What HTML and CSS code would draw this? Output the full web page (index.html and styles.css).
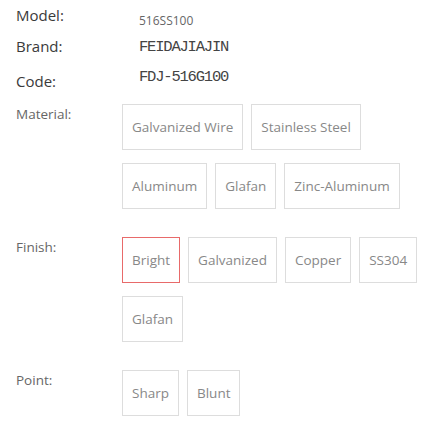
FILE: index.html
```html
<!DOCTYPE html>
<html lang="en">
<head>
    <meta charset="UTF-8">
    <title>Product</title>
    <link rel="stylesheet" href="styles.css">
</head>
<body>
<div class="product">

    <!-- basic info -->
    <div class="info">
        <div class="info-row row-model">
            <span class="info-label">Model:</span>
            <span class="info-value model-value">516SS100</span>
        </div>
        <div class="info-row row-brand">
            <span class="info-label">Brand:</span>
            <span class="info-value mono">FEIDAJIAJIN</span>
        </div>
        <div class="info-row row-code">
            <span class="info-label">Code:</span>
            <span class="info-value mono">FDJ-516G100</span>
        </div>
    </div>

    <!-- options -->
    <div class="option">
        <div class="option-label">Material:</div>
        <div class="option-list">
            <a href="#" class="option-item">Galvanized Wire</a>
            <a href="#" class="option-item">Stainless Steel</a>
            <a href="#" class="option-item">Aluminum</a>
            <a href="#" class="option-item">Glafan</a>
            <a href="#" class="option-item">Zinc-Aluminum</a>
        </div>
    </div>

    <div class="option">
        <div class="option-label">Finish:</div>
        <div class="option-list">
            <a href="#" class="option-item selected">Bright</a>
            <a href="#" class="option-item">Galvanized</a>
            <a href="#" class="option-item">Copper</a>
            <a href="#" class="option-item">SS304</a>
            <a href="#" class="option-item">Glafan</a>
        </div>
    </div>

    <div class="option">
        <div class="option-label">Point:</div>
        <div class="option-list">
            <a href="#" class="option-item">Sharp</a>
            <a href="#" class="option-item">Blunt</a>
        </div>
    </div>
</div>
</body>
</html>
```

FILE: styles.css
```css
body {
    margin: 0;
    background: #fff;
    font-family: "Open Sans", "Liberation Sans", sans-serif;
}

.product {
    padding: 5px 0 0 16px;
}

.info-row {
    display: flex;
    align-items: flex-start;
    height: 20px;
}

.row-brand {
    margin-top: 11px;
}

.row-code {
    margin-top: 14px;
}

.info-label {
    width: 123px;
    font-size: 15px;
    line-height: 20px;
    color: #3a3a3a;
}

.row-code .info-label {
    padding-top: 1px;
}

.info-value {
    line-height: 20px;
    color: #333;
}

.model-value {
    font-size: 12px;
    color: #666;
    padding-top: 6px;
}

.mono {
    font-family: "Liberation Mono", monospace;
    font-size: 15.5px;
    letter-spacing: -1.2px;
    padding-top: 1px;
    color: #444;
}

.row-code .mono {
    padding-top: 0;
    margin-top: -3px;
}

.option {
    display: flex;
    align-items: flex-start;
    margin-top: 14px;
}

.option + .option {
    margin-top: 28px;
}

.option-label {
    width: 106px;
    flex-shrink: 0;
    font-size: 13.5px;
    line-height: 20px;
    color: #666;
}

.option-list {
    display: flex;
    flex-wrap: wrap;
    gap: 13px 8px;
}

.option-item {
    display: block;
    padding: 12px 9px;
    border: 1px solid #ddd;
    font-size: 13.5px;
    line-height: 20px;
    color: #888;
    text-decoration: none;
}

.option-item.selected {
    border-color: #e86a6a;
}
```
